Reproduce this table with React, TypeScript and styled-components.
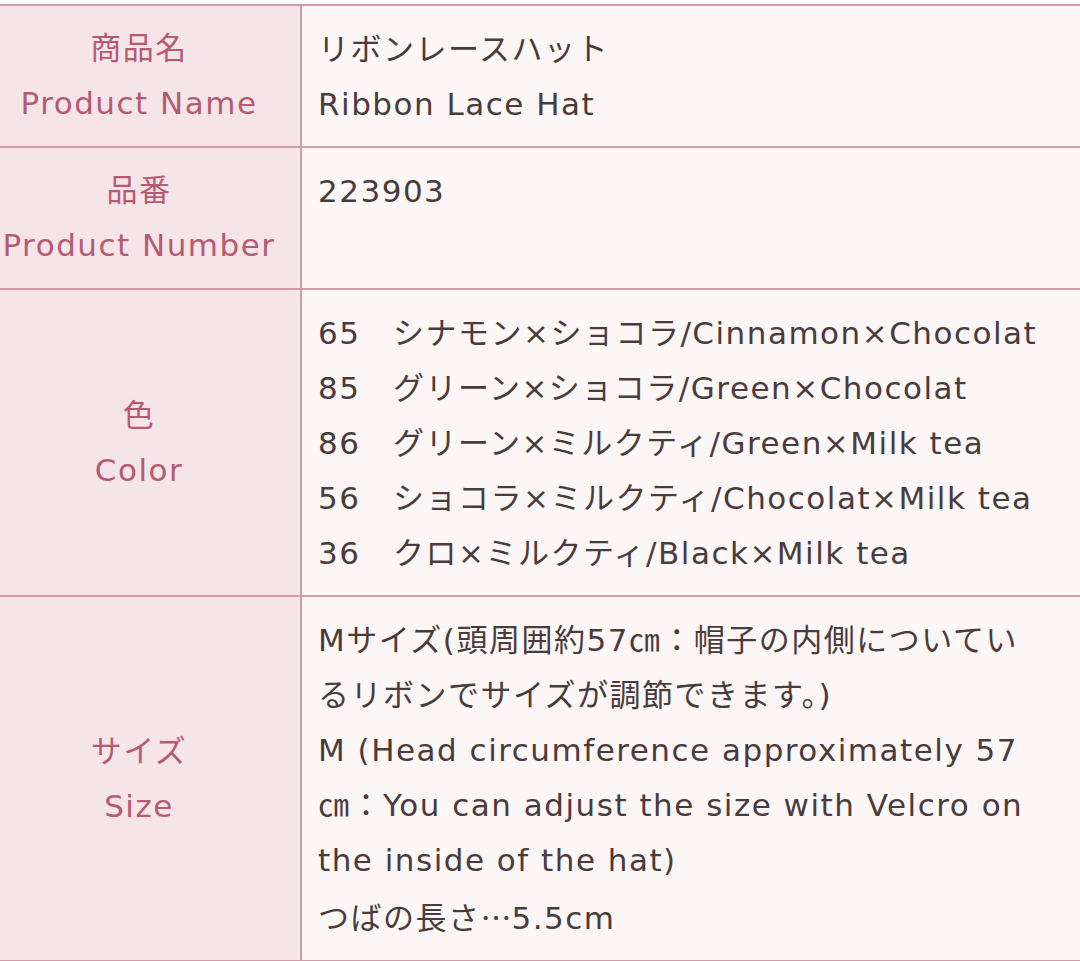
import React from 'react';
import styled, { createGlobalStyle } from 'styled-components';

const GlobalStyle = createGlobalStyle`
	html,
	body {
		margin: 0;
		padding: 0;
		background: #ffffff;
		overflow: hidden;
	}
`;

const Page = styled.div`
	width: 1080px;
	height: 961px;
	padding-top: 4px;
	box-sizing: border-box;
	overflow: hidden;
	font-family: 'DejaVu Sans', 'Noto Sans CJK JP', sans-serif;
	font-size: 31px;
	letter-spacing: 1.5px;
	line-height: 55px;
`;

const SpecTable = styled.div`
	width: 1100px;
	border-top: 2px solid #d59ca8;
`;

const Row = styled.div`
	display: grid;
	grid-template-columns: 302px 1fr;
	border-bottom: 2px solid #d59ca8;
`;

const LabelCell = styled.div`
	display: flex;
	flex-direction: column;
	align-items: center;
	justify-content: center;
	background: #f6e5e8;
	border-right: 2px solid #cf9aa6;
	color: #b65a74;
	padding: 15px 22px 15px 0;
`;

const ValueCell = styled.div`
	background: #fdf6f6;
	color: #4a3b3c;
	padding: 16px 0 14px 16px;
`;

const Line = styled.div`
	white-space: pre;
`;

// the reference draws the ellipsis with centred dots, as a Japanese font does
const JaGlyph = styled.span`
	font-family: 'Noto Sans CJK JP', sans-serif;
	letter-spacing: 0;
`;

type Spec = { ja: string; en: string; lines: string[] };

const specs: Spec[] = [
	{ ja: '商品名', en: 'Product Name', lines: ['リボンレースハット', 'Ribbon Lace Hat'] },
	{ ja: '品番', en: 'Product Number', lines: ['223903', ''] },
	{
		ja: '色',
		en: 'Color',
		lines: [
			'65　シナモン×ショコラ/Cinnamon×Chocolat',
			'85　グリーン×ショコラ/Green×Chocolat',
			'86　グリーン×ミルクティ/Green×Milk tea',
			'56　ショコラ×ミルクティ/Chocolat×Milk tea',
			'36　クロ×ミルクティ/Black×Milk tea',
		],
	},
	{
		ja: 'サイズ',
		en: 'Size',
		lines: [
			'Mサイズ(頭周囲約57㎝：帽子の内側についてい',
			'るリボンでサイズが調節できます。)',
			'M (Head circumference approximately 57',
			'㎝：You can adjust the size with Velcro on',
			'the inside of the hat)',
			'つばの長さ…5.5cm',
		],
	},
];

const renderLine = (line: string): React.ReactNode => {
	if (!line) return ' ';
	const parts = line.split('…');
	return parts.map((part, i) => (
		<React.Fragment key={i}>
			{i > 0 && <JaGlyph>…</JaGlyph>}
			{part}
		</React.Fragment>
	));
};

const App = (): JSX.Element => {
	return (
		<Page>
			<GlobalStyle />
			<SpecTable>
				{specs.map((spec) => (
					<Row key={spec.en}>
						<LabelCell>
							<Line>{spec.ja}</Line>
							<Line>{spec.en}</Line>
						</LabelCell>
						<ValueCell>
							{spec.lines.map((line, i) => (
								<Line key={i}>{renderLine(line)}</Line>
							))}
						</ValueCell>
					</Row>
				))}
			</SpecTable>
		</Page>
	);
};

export default App;
